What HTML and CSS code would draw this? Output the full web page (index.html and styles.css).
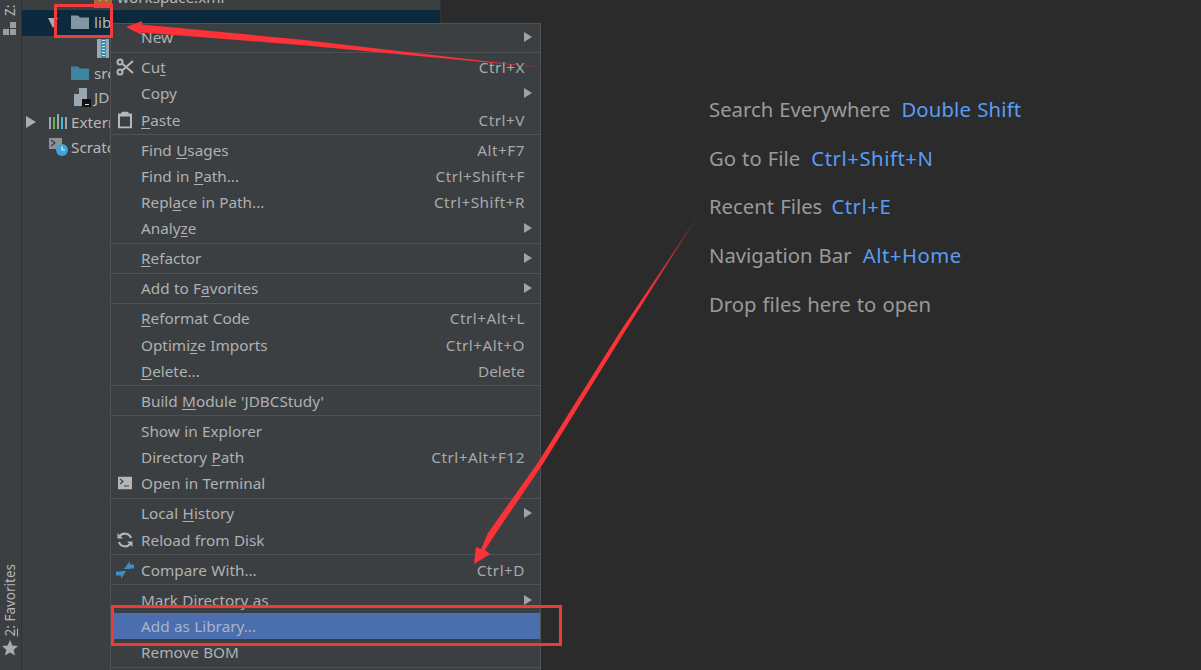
FILE: index.html
```html
<!DOCTYPE html>
<html lang="en">
<head>
<meta charset="utf-8">
<title>IDE context menu</title>
<link rel="stylesheet" href="styles.css">
</head>
<body>
<div class="app">
  <aside class="stripe">
    <div class="stripe-top">
      <span class="vtext vtext-top">Z:</span>
      <svg class="stripe-icon" width="14" height="13" viewBox="0 0 14 13"><path fill="#9a9c9e" d="M0 7h6v6H0zM7 7h6v6H7zM7 0h6v6H7z"/></svg>
    </div>
    <div class="stripe-bottom">
      <span class="vtext"><u>2</u>: Favorites</span>
      <svg width="16" height="16" viewBox="0 0 16 16"><path fill="#a9abad" d="M8 0l2.300 5.400 5.700.5-4.300 3.800 1.300 5.800L8 12.500l-5 3 1.300-5.800L0 5.900l5.700-.5z"/></svg>
    </div>
  </aside>
  <section class="tree">
    <div class="row row-clip">
      <svg class="ticon" width="18" height="16" viewBox="0 0 18 16"><rect width="18" height="16" fill="#b0622f"/><path d="M5 9l4-4 4 4" fill="none" stroke="#d9a27c" stroke-width="1.200"/></svg>
      <span>workspace.xml</span>
    </div>
    <div class="row row-sel row-l2">
      <span class="tw tw-open"></span>
      <svg class="ticon" width="18" height="15" viewBox="0 0 18 15"><path fill="#8596a3" d="M0 1.500h7l2 2h9V15H0z"/></svg>
      <span>lib</span>
    </div>
    <div class="row row-zip">
      <svg class="ticon" width="12" height="19" viewBox="0 0 12 19"><rect width="12" height="19" fill="#9aa7b0"/><rect x="4" width="5" height="19" fill="#2a93b8"/><path d="M5 1.500h3M5 4.500h3M5 7.500h3M5 10.500h3M5 13.500h3M5 16.500h3" stroke="#cfe3ea" stroke-width="1"/></svg>
    </div>
    <div class="row row-l2">
      <span class="tw"></span>
      <svg class="ticon" width="18" height="15" viewBox="0 0 18 15"><path fill="#3e86a0" d="M0 1.500h7l2 2h9V15H0z"/></svg>
      <span>src</span>
    </div>
    <div class="row row-l2">
      <span class="tw"></span>
      <svg class="ticon icon-file" width="18" height="19" viewBox="0 0 18 19"><path fill="#9aa7b0" d="M1 6l5-6h8v18H1z"/><path fill="#3c3f41" d="M6 0v6H1z"/><rect x="9" y="11" width="9" height="8" fill="#111"/><rect x="12" y="16" width="4" height="1" fill="#ddd"/></svg>
      <span>JDBCStudy.iml</span>
    </div>
    <div class="row row-l0">
      <span class="tw tw-closed"></span>
      <svg class="ticon icon-lib" width="19" height="15" viewBox="0 0 19 15"><path d="M1 3v12" stroke="#9aa7b0" stroke-width="2"/><path d="M5 3v12" stroke="#62b543" stroke-width="2"/><path d="M9 0v15" stroke="#9aa7b0" stroke-width="2"/><path d="M13 3v12" stroke="#40b6e0" stroke-width="2"/><path d="M17 3v12" stroke="#9aa7b0" stroke-width="2"/></svg>
      <span>External Libraries</span>
    </div>
    <div class="row row-l0 row-last">
      <span class="tw"></span>
      <svg class="ticon icon-lib" width="19" height="18" viewBox="0 0 19 18"><rect y="0" width="13" height="11" fill="#8c9398"/><path d="M2 2l4 3-4 3" fill="none" stroke="#3c3f41" stroke-width="1.200"/><circle cx="13" cy="12" r="6" fill="#40a4d8"/><path d="M13 8.500V12h3" fill="none" stroke="#e8f4fa" stroke-width="1.200"/></svg>
      <span>Scratches and Consoles</span>
    </div>
  </section>
  <main class="empty">
    <p class="hint">Search Everywhere <b class="word">Double Shift</b></p>
    <p class="hint">Go to File <b>Ctrl+Shift+N</b></p>
    <p class="hint">Recent Files <b class="near">Ctrl+E</b></p>
    <p class="hint">Navigation Bar <b>Alt+Home</b></p>
    <p class="hint">Drop files here to open</p>
  </main>
</div>

<nav class="menu">
  <div class="mi"><span class="ml">New</span><i class="sub"></i></div>
  <hr>
  <div class="mi"><svg class="mic" width="18" height="18" viewBox="0 0 18 18"><g fill="none" stroke="#b4b6b8" stroke-width="2"><circle cx="4" cy="4" r="2.500"/><circle cx="4" cy="14" r="2.500"/><path d="M6 5.500L17 15M6 12.500L17 3"/></g></svg><span class="ml">Cu<u>t</u></span><span class="ms">Ctrl+X</span></div>
  <div class="mi"><span class="ml">Copy</span><i class="sub"></i></div>
  <div class="mi"><svg class="mic" width="14" height="17" viewBox="0 0 14 17"><path fill="#b4b6b8" d="M0 2h3.500V0h7v2H14v15H0zM2 5v10h10V5z"/></svg><span class="ml"><u>P</u>aste</span><span class="ms">Ctrl+V</span></div>
  <hr>
  <div class="mi"><span class="ml">Find <u>U</u>sages</span><span class="ms">Alt+F7</span></div>
  <div class="mi"><span class="ml">Find in <u>P</u>ath...</span><span class="ms">Ctrl+Shift+F</span></div>
  <div class="mi"><span class="ml">Repl<u>a</u>ce in Path...</span><span class="ms">Ctrl+Shift+R</span></div>
  <div class="mi"><span class="ml">Analy<u>z</u>e</span><i class="sub"></i></div>
  <hr>
  <div class="mi"><span class="ml"><u>R</u>efactor</span><i class="sub"></i></div>
  <hr>
  <div class="mi"><span class="ml">Add to F<u>a</u>vorites</span><i class="sub"></i></div>
  <hr>
  <div class="mi"><span class="ml"><u>R</u>eformat Code</span><span class="ms">Ctrl+Alt+L</span></div>
  <div class="mi"><span class="ml">Optimi<u>z</u>e Imports</span><span class="ms">Ctrl+Alt+O</span></div>
  <div class="mi"><span class="ml"><u>D</u>elete...</span><span class="ms ms-word">Delete</span></div>
  <hr>
  <div class="mi"><span class="ml">Build <u>M</u>odule 'JDBCStudy'</span></div>
  <hr>
  <div class="mi"><span class="ml">Show in Explorer</span></div>
  <div class="mi"><span class="ml">Directory <u>P</u>ath</span><span class="ms">Ctrl+Alt+F12</span></div>
  <div class="mi"><svg class="mic" width="14" height="13" viewBox="0 0 14 13"><rect width="14" height="13" fill="#b4b6b8"/><path d="M2 2.500l3 2.500-3 2.500" fill="none" stroke="#3c3f41" stroke-width="1.200"/><path d="M6 9.500h5" stroke="#3c3f41" stroke-width="1.200"/></svg><span class="ml">Open in Terminal</span></div>
  <hr>
  <div class="mi"><span class="ml">Local <u>H</u>istory</span><i class="sub"></i></div>
  <div class="mi"><svg class="mic" width="17" height="17" viewBox="0 0 17 17"><g fill="none" stroke="#b4b6b8" stroke-width="2.200"><path d="M14.500 6.500A6.500 6.500 0 0 0 3 5"/><path d="M2.500 10.500A6.500 6.500 0 0 0 14 12"/></g><path fill="#b4b6b8" d="M1 1.500V7h5.500zM16 15.500V10h-5.500z"/></svg><span class="ml">Reload from Disk</span></div>
  <hr>
  <div class="mi"><svg class="mic" width="18" height="18" viewBox="0 0 18 18"><path fill="#3592c4" d="M8 8L14 0v3.500h4v4H14V8zM10 10L5 18v-3.500H0v-4h5V10z"/></svg><span class="ml">Compare With...</span><span class="ms">Ctrl+D</span></div>
  <hr>
  <div class="mi"><span class="ml">Mark Directory as</span><i class="sub"></i></div>
  <div class="mi mi-sel"><span class="ml">Add as Library...</span></div>
  <div class="mi"><span class="ml">Remove BOM</span></div>
  <hr>
</nav>

<svg class="marks" width="1201" height="670" viewBox="0 0 1201 670">
  <defs>
    <linearGradient id="fade" gradientUnits="userSpaceOnUse" x1="640" y1="300" x2="699" y2="214">
      <stop offset="0" stop-color="#fb3237"/>
      <stop offset="1" stop-color="#fb3237" stop-opacity="0.350"/>
    </linearGradient>
  </defs>
  <rect x="55.500" y="5.500" width="56" height="31" fill="none" stroke="#f53a3a" stroke-width="3"/>
  <rect x="112.500" y="606.500" width="448" height="38" fill="none" stroke="#ef3a3a" stroke-width="3"/>
  <path fill="#fb3237" d="M126 27L142 21L142 24.500L300 39.500L541 67.500L300 45L142 32.500L142 35Z"/>
  <path fill="url(#fade)" d="M699 214L624 333L543.500 463L496 533L485 550L490 554L474 564L476 547L481 549L488 533L537.700 463L619.300 333Z"/>
</svg>
</body>
</html>
```

FILE: styles.css
```css
* { box-sizing: border-box; }
html, body { margin: 0; height: 100%; background: #2b2b2b; overflow: hidden; }
body { font-family: "Noto Sans", "Open Sans", sans-serif; color: #bbbbbb; }
.app { display: flex; height: 670px; width: 1201px; }

.stripe { width: 22px; flex: none; background: #3c3f41; border-right: 1px solid #323232; display: flex; flex-direction: column; justify-content: space-between; align-items: center; overflow: hidden; padding: 0 1px 14px 0; }
.stripe-top { display: flex; flex-direction: column; align-items: center; gap: 6px; }
.stripe-bottom { display: flex; flex-direction: column; align-items: center; gap: 4px; }
.stripe-icon { width: 14px; height: 13px; }
.vtext { writing-mode: vertical-rl; transform: rotate(180deg); font-size: 13.500px; color: #b4b6b8; line-height: 14px; white-space: nowrap; }
.vtext-top { height: 16px; }

.tree { width: 419px; flex: none; background: #3c3f41; border-right: 1px solid #323232; font-size: 15.300px; color: #b6b8ba; overflow: hidden; }
.row { height: 24.500px; display: flex; align-items: center; white-space: nowrap; }
.row-l0 { padding-left: 4px; }
.row-l2 { padding-left: 26px; }
.row-last { margin-top: 1px; }
.row-clip { height: 10px; padding-left: 72px; align-items: flex-end; overflow: visible; }
.row-clip .ticon { position: relative; top: -2px; }
.row-clip span { position: relative; top: -3px; }
.row-sel { height: 26px; padding-bottom: 3px; background: #0d293e; }
.row-zip { padding-left: 75px; }
.tw { width: 14px; flex: none; height: 12px; margin-right: 9px; }
.tw-open::before { content: ""; display: block; margin-top: 2px; border-left: 5.500px solid transparent; border-right: 5.500px solid transparent; border-top: 10px solid #a9abad; width: 0; }
.tw-closed::before { content: ""; display: block; border-top: 6px solid transparent; border-bottom: 6px solid transparent; border-left: 10px solid #a9abad; width: 0; }
.row .ticon { flex: none; margin-right: 5px; }
.row .icon-file { margin-left: 2px; margin-right: 3px; }
.row .icon-lib { margin-right: 3px; }

.empty { flex: 1; display: flex; flex-direction: column; padding: 96px 0 0 268px; font-size: 20.300px; color: #9a9a9a; word-spacing: 0.800px; }
.hint { margin: 0; height: 48.700px; line-height: 26px; white-space: nowrap; }
.hint b { font-weight: 400; color: #589df6; margin-left: 5px; letter-spacing: 0.550px; }
.hint b.word { letter-spacing: 0.150px; }
.hint b.near { margin-left: 3px; }

.menu { position: absolute; left: 110px; top: 23px; width: 431px; background: #3c3f41; border: 1px solid #515151; border-bottom: 0; height: 647px; overflow: hidden; font-size: 15.300px; color: #afb1b3; word-spacing: 0.400px; }
.menu hr { border: 0; height: 1px; margin: 1.375px 0; background: #515151; }
.mi { position: relative; height: 26.250px; display: flex; align-items: center; padding: 0 15px 0 30px; white-space: nowrap; }
.ml { flex: 1; }
.ms { color: #a7a9ab; letter-spacing: 0.500px; }
.ms-word { letter-spacing: 0.100px; }
.mi u { text-underline-offset: 2px; }
.mic { position: absolute; left: 14px; top: 50%; transform: translate(-50%, -50%); }
.sub { width: 0; border-top: 5px solid transparent; border-bottom: 5px solid transparent; border-left: 8px solid #a0a2a4; margin-right: -7px; }
.mi-sel { background: #4b6eaf; color: #a9b4c8; }

.marks { position: absolute; left: 0; top: 0; pointer-events: none; }
```
